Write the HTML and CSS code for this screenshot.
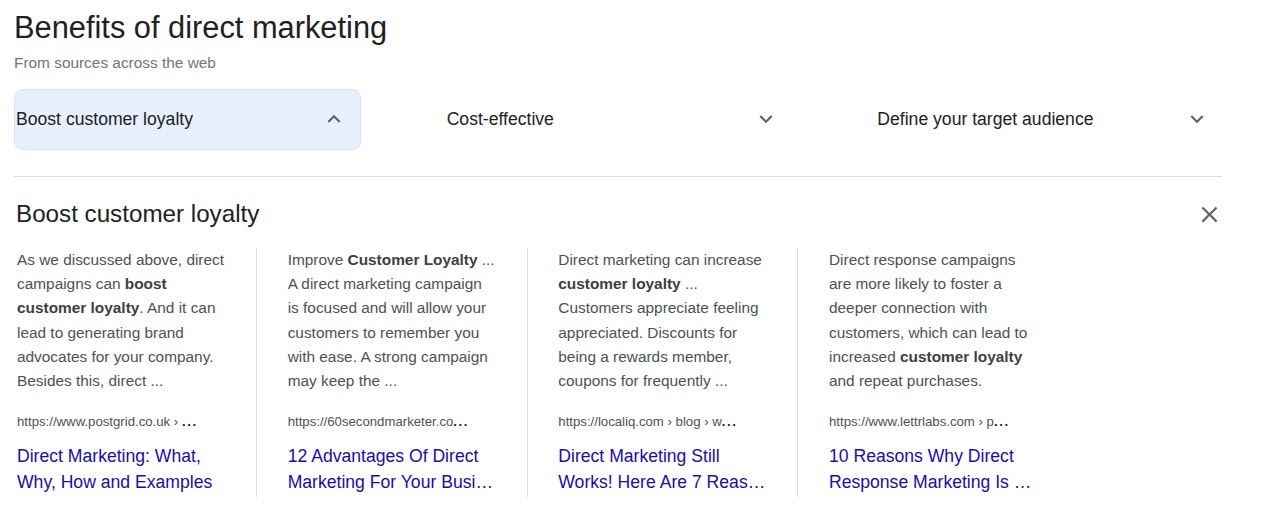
FILE: index.html
```html
<!DOCTYPE html>
<html lang="en">
<head>
<meta charset="utf-8">
<title>Benefits of direct marketing</title>
<link rel="stylesheet" href="styles.css">
</head>
<body>
<div class="page">
  <h1 class="title">Benefits of direct marketing</h1>
  <div class="sub">From sources across the web</div>

  <div class="tabs">
    <div class="tab active">
      <span class="tab-label">Boost customer loyalty</span>
      <svg class="chev" viewBox="0 0 24 24"><path d="M12 8l-6 6 1.41 1.41L12 10.83l4.59 4.58L18 14z"/></svg>
    </div>
    <div class="tab">
      <span class="tab-label">Cost-effective</span>
      <svg class="chev" viewBox="0 0 24 24"><path d="M16.59 8.59L12 13.17 7.41 8.59 6 10l6 6 6-6z"/></svg>
    </div>
    <div class="tab">
      <span class="tab-label">Define your target audience</span>
      <svg class="chev" viewBox="0 0 24 24"><path d="M16.59 8.59L12 13.17 7.41 8.59 6 10l6 6 6-6z"/></svg>
    </div>
  </div>

  <div class="rule"></div>

  <div class="detail">
    <div class="detail-head">
      <h2 class="detail-title">Boost customer loyalty</h2>
      <svg class="close" viewBox="0 0 24 24"><path d="M19 6.41L17.59 5 12 10.59 6.41 5 5 6.41 10.59 12 5 17.59 6.41 19 12 13.41 17.59 19 19 17.59 13.41 12z"/></svg>
    </div>

    <div class="cards">
      <div class="card">
        <p class="snippet">As we discussed above, direct campaigns can <b>boost customer loyalty</b>. And it can lead to generating brand advocates for your company. Besides this, direct ...</p>
        <div class="cite"><span>https://www.postgrid.co.uk › </span><span class="dots">...</span></div>
        <a class="link" href="#"><span class="line">Direct Marketing: What,</span><span class="line">Why, How and Examples</span></a>
      </div>
      <div class="card">
        <p class="snippet">Improve <b>Customer Loyalty</b> ...<br>A direct marketing campaign is focused and will allow your customers to remember you with ease. A strong campaign may keep the ...</p>
        <div class="cite"><span>https://60secondmarketer.co</span><span class="dots">...</span></div>
        <a class="link" href="#"><span class="line">12 Advantages Of Direct</span><span class="line">Marketing For Your Business</span></a>
      </div>
      <div class="card">
        <p class="snippet">Direct marketing can increase <b>customer loyalty</b> ...<br>Customers appreciate feeling appreciated. Discounts for being a rewards member, coupons for frequently ...</p>
        <div class="cite"><span>https://localiq.com › blog › w</span><span class="dots">...</span></div>
        <a class="link" href="#"><span class="line">Direct Marketing Still</span><span class="line">Works! Here Are 7 Reasons Why</span></a>
      </div>
      <div class="card">
        <p class="snippet">Direct response campaigns are more likely to foster a deeper connection with customers, which can lead to increased <b>customer loyalty</b> and repeat purchases.</p>
        <div class="cite"><span>https://www.lettrlabs.com › p</span><span class="dots">...</span></div>
        <a class="link" href="#"><span class="line">10 Reasons Why Direct</span><span class="line">Response Marketing Is Effective</span></a>
      </div>
    </div>
  </div>
</div>
</body>
</html>
```

FILE: styles.css
```css
* { box-sizing: border-box; }

html, body {
  margin: 0;
  padding: 0;
  background: #ffffff;
}

body {
  font-family: "Liberation Sans", Arial, sans-serif;
  color: #202124;
}

.page {
  width: 1236px;
  padding: 0 14px;
}

.title {
  margin: 8px 0 0 0;
  font-size: 30.8px;
  line-height: 40px;
  font-weight: normal;
  color: #202124;
}

.sub {
  margin-top: 4px;
  font-size: 15.4px;
  line-height: 22px;
  color: #70757a;
}

.tabs {
  margin-top: 15px;
  display: grid;
  grid-template-columns: repeat(3, 1fr);
  column-gap: 84px;
}

.tab {
  height: 61px;
  display: flex;
  align-items: center;
  justify-content: space-between;
  padding: 0 11px 1px 1px;
  border: 1px solid transparent;
  border-radius: 9px;
}

.tab.active {
  background: #e8f0fe;
  border-color: #d2e3fc;
  padding-right: 13px;
}

.tab-label {
  font-size: 17.6px;
  line-height: 24px;
  color: #202124;
}

.chev {
  width: 26px;
  height: 26px;
  fill: #5f6368;
  flex: none;
}

.rule {
  margin-top: 26px;
  height: 1px;
  background: #dadce0;
}

.detail {
  padding-left: 2px;
}

.detail-head {
  margin-top: 21px;
  display: flex;
  align-items: center;
  justify-content: space-between;
}

.detail-title {
  margin: 0;
  font-size: 24.2px;
  line-height: 32px;
  font-weight: normal;
  color: #202124;
}

.close {
  width: 27px;
  height: 27px;
  fill: #5f6368;
  margin-right: -0.5px;
}

.cards {
  margin-top: 18px;
  padding-left: 1px;
  display: flex;
}

.card {
  width: 240px;
  padding-right: 31px;
  border-right: 1px solid #dadce0;
  margin-right: 30.67px;
  height: 249px;
  flex: none;
}

.card:last-child {
  border-right: none;
}

.snippet {
  margin: 0;
  width: 209px;
  font-size: 15.4px;
  line-height: 24.2px;
  color: #4d5156;
}

.snippet b {
  color: #3c4043;
  font-weight: bold;
}

.cite {
  margin-top: 19px;
  font-size: 13.2px;
  line-height: 20px;
  color: #4d5156;
  white-space: nowrap;
}

.dots {
  font-weight: bold;
  color: #202124;
  letter-spacing: 1.6px;
}

.link {
  margin-top: 11px;
  display: block;
  width: 209px;
  font-size: 17.6px;
  line-height: 26px;
  color: #1a0dab;
  text-decoration: none;
}

.line {
  display: block;
  white-space: nowrap;
  overflow: hidden;
  text-overflow: ellipsis;
}
```
